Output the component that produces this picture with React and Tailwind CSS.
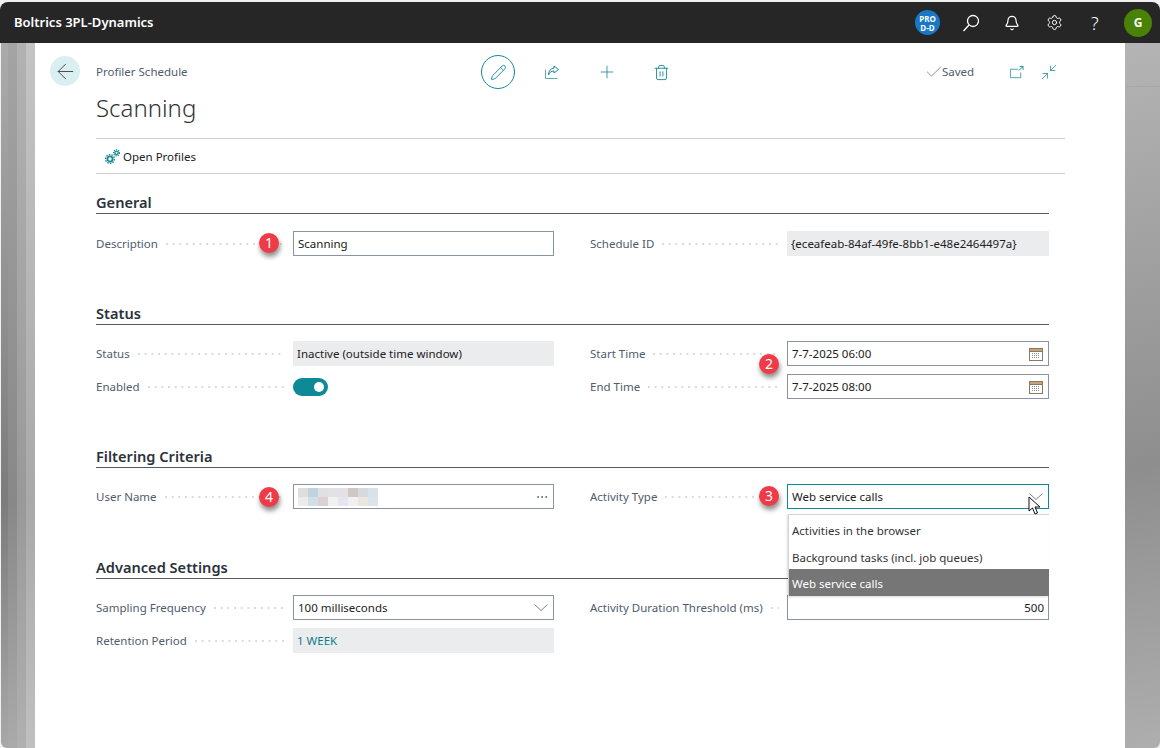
import React from 'react'
import { Bell, Check, Ellipsis, Minimize2, Pencil, Plus, Settings, Trash2, ArrowLeft } from 'lucide-react'

const mosaic = [
    'bg-[#e0dedd]', 'bg-[#bfd4dc]', 'bg-[#e0e0e2]', 'bg-[#e1e1e6]', 'bg-[#e4e0e6]', 'bg-[#d0c8c8]', 'bg-[#d6d9de]', 'bg-[#d6e2ec]',
    'bg-[#edecea]', 'bg-[#cfe0ea]', 'bg-[#d9d2d0]', 'bg-[#f1f1f2]', 'bg-[#e6e6f0]', 'bg-[#f1f1f4]', 'bg-[#ece6e0]', 'bg-[#dbe4ec]',
]

function Badge({ n, className }) {
    return (
        <div className={`absolute w-[20px] h-[20px] rounded-full bg-[#ef3b47] text-white text-[14px] leading-[20px] text-center shadow-[1px_4px_5px_rgba(0,0,0,0.45)] ${className}`}>
            {n}
        </div>
    )
}

function CalendarIcon() {
    return (
        <svg width="14" height="14" viewBox="0 0 14 14" className="shrink-0 mr-[1px]">
            <rect x="0.5" y="1.5" width="13" height="12" fill="#fff" stroke="#8a7a62" />
            <rect x="0.5" y="1.5" width="13" height="3" fill="#c4a47c" stroke="#8a7a62" />
            <path d="M3 6.5h8M3 8.5h8M3 10.5h8" stroke="#8a8a8a" strokeDasharray="1 1" />
        </svg>
    )
}

function Chevron() {
    return (
        <svg width="14" height="7" viewBox="0 0 14 7" fill="none" stroke="#6b7686" strokeWidth="0.9" className="shrink-0 mr-[1px]">
            <path d="M0.5 0.5L7 6.5l6.5-6" />
        </svg>
    )
}

function Row({ label, children, badge }) {
    return (
        <div className="relative flex items-center h-[25px]">
            <span className="text-[11.5px] text-[#505c6d] whitespace-nowrap">{label}</span>
            <span className="flex-1 h-[2px] ml-[8px] mr-[8px] bg-[linear-gradient(to_right,#d8dadd_2px,transparent_2px)] bg-[length:6.7px_2px]"></span>
            {children}
            {badge}
        </div>
    )
}

function Box({ children, w = 'w-[261px]', line = 'border-[#8a93a3]', className = '' }) {
    return (
        <div className={`${w} h-[25px] shrink-0 flex items-center px-[4px] text-[11.5px] text-[#212121] whitespace-nowrap border ${line} bg-white ${className}`}>
            {children}
        </div>
    )
}

function ReadOnly({ children, w = 'w-[261px]', color = 'text-[#212121]' }) {
    return (
        <div className={`${w} h-[25px] shrink-0 flex items-center px-[4px] text-[11.5px] whitespace-nowrap bg-[#ebecee] ${color}`}>
            {children}
        </div>
    )
}

function Section({ title, className = '', left, right, gap = 'mt-[16px]' }) {
    return (
        <section className={className}>
            <h2 className="h-[22px] text-[14.6px] leading-[20px] font-semibold text-[#2b323c] border-b border-[#505c6d]">{title}</h2>
            <div className={`grid grid-cols-[458px_459px] gap-x-[36px] ${gap}`}>
                <div className="flex flex-col gap-y-[8px]">{left}</div>
                <div className="flex flex-col gap-y-[8px]">{right}</div>
            </div>
        </section>
    )
}

export default function App() {
    return (
        <div className="w-[1160px] h-[748px] overflow-hidden flex flex-col bg-[#f0f0f0] pt-[2px] font-['Noto_Sans','Open_Sans',sans-serif]">
            <header className="h-[41px] shrink-0 bg-[#262626] rounded-t-[8px] flex items-center text-white">
                <span className="ml-[14px] text-[13px] font-semibold">Boltrics 3PL-Dynamics</span>
                <div className="ml-auto w-[25px] h-[25px] rounded-full bg-[#1878c6] flex flex-col items-center justify-center text-[8px] leading-[9px] font-bold">
                    <span>PRO</span>
                    <span>D-D</span>
                </div>
                <svg width="18" height="18" viewBox="0 0 18 18" fill="none" stroke="#fff" strokeWidth="1.3" className="ml-[22px]">
                    <circle cx="11" cy="7" r="5.5" />
                    <path d="M7 11l-5.5 6" />
                </svg>
                <Bell size={16} strokeWidth={1.8} className="ml-[24px]" />
                <Settings size={17} strokeWidth={1.4} className="ml-[26px]" />
                <span className="ml-[28px] w-[10px] text-[18px] leading-none font-light">?</span>
                <div className="ml-[23px] mr-[8px] w-[28px] h-[28px] rounded-full bg-[#498205] flex items-center justify-center text-[12px] font-bold">G</div>
            </header>

            <main className="flex-1 flex min-h-0">
                <div className="w-[35px] shrink-0 flex pl-[1px]">
                    <div className="w-[7px] rounded-bl-[6px] bg-[linear-gradient(#ababab,#7c7c7c_65%,#a8a8a8)]"></div>
                    <div className="w-[9px] bg-[linear-gradient(#a4a4a4,#888888_65%,#aaaaaa)]"></div>
                    <div className="w-[9px] bg-[linear-gradient(#b2b2b2,#999999_65%,#b0b0b0)]"></div>
                    <div className="w-[9px] bg-[linear-gradient(#c4c4c4,#a9a9a9_65%,#c0c0c0)]"></div>
                </div>

                <div className="w-[1090px] shrink-0 bg-white flex pt-[12px] pl-[15px]">
                    <div className="w-[30px] h-[30px] mt-[1px] rounded-full bg-[#d9eff2] flex items-center justify-center">
                        <ArrowLeft size={25} strokeWidth={0.9} className="text-[#444]" />
                    </div>

                    <div className="ml-[16px] w-[969px]">
                        <div className="flex items-center h-[34px]">
                            <span className="w-[385px] text-[11.5px] text-[#505c6d]">Profiler Schedule</span>
                            <div className="w-[34px] h-[34px] rounded-full border border-[#1a8a94] flex items-center justify-center">
                                <Pencil size={17} strokeWidth={1.3} className="text-[#1a8a94]" />
                            </div>
                            <svg width="16" height="16" viewBox="0 0 16 16" fill="none" stroke="#1a8a94" strokeWidth="1" className="ml-[29px]">
                                <path d="M1.5 5.5v9h12" opacity="0.7" />
                                <path d="M10 2l4.5 3.5L10 9V7C7 7 5.5 8.5 4.5 11 4.5 7 6.5 4.5 10 4z" />
                            </svg>
                            <Plus size={20} strokeWidth={1} className="ml-[37px] text-[#1a8a94]" />
                            <Trash2 size={17} strokeWidth={1.3} className="ml-[36px] text-[#1a8a94]" />
                            <Check size={20} strokeWidth={0.8} className="ml-[254px] text-[#505c6d]" />
                            <span className="-ml-[2px] text-[11.5px] text-[#505c6d]">Saved</span>
                            <svg width="15" height="15" viewBox="0 0 16 16" fill="none" stroke="#1a8a94" strokeWidth="1" className="ml-[35px]">
                                <path d="M10 4.5H1.5v9h11V8" opacity="0.8" />
                                <path d="M10.5 6L14.5 2M11.5 1.5h3.5V5" />
                            </svg>
                            <Minimize2 size={18} strokeWidth={1} className="ml-[16px] text-[#1a8a94]" />
                        </div>
                        <h1 className="mt-[1px] h-[48px] text-[24px] leading-[36px] font-light text-[#333]">Scanning</h1>

                        <div className="flex items-center h-[36px] border-y border-[#d0d0d0] pl-[9px]">
                            <svg width="15" height="15" viewBox="0 0 15 15" fill="none" stroke="#1a8a94" className="shrink-0">
                                <circle cx="5" cy="10" r="2.6" strokeWidth="1.8" />
                                <circle cx="5" cy="10" r="4.4" strokeWidth="1.4" strokeDasharray="1.5 1.2" />
                                <circle cx="11.5" cy="3.8" r="1.7" strokeWidth="1.4" />
                                <circle cx="11.5" cy="3.8" r="3" strokeWidth="1.2" strokeDasharray="1.2 1" />
                            </svg>
                            <span className="ml-[3px] pt-[2px] text-[11.5px] text-[#212121]">Open Profiles</span>
                        </div>

                        <div className="relative mt-[18px] w-[953px]">
                            <Section
                                title="General"
                                gap="mt-[17px]"
                                left={
                                    <Row label="Description" badge={<Badge n="1" className="left-[163px] top-[2px]" />}>
                                        <Box>Scanning</Box>
                                    </Row>
                                }
                                right={
                                    <Row label="Schedule ID">
                                        <ReadOnly w="w-[262px]">{'{eceafeab-84af-49fe-8bb1-e48e2464497a}'}</ReadOnly>
                                    </Row>
                                }
                            />
                            <Section
                                title="Status"
                                className="mt-[47px]"
                                left={
                                    <>
                                        <Row label="Status">
                                            <ReadOnly>Inactive (outside time window)</ReadOnly>
                                        </Row>
                                        <Row label="Enabled">
                                            <div className="w-[261px] shrink-0">
                                                <div className="w-[35px] h-[18px] rounded-full bg-[#0e8a96] flex items-center justify-end pr-[4px]">
                                                    <div className="w-[10px] h-[10px] rounded-full bg-white"></div>
                                                </div>
                                            </div>
                                        </Row>
                                    </>
                                }
                                right={
                                    <>
                                        <Row label="Start Time" badge={<Badge n="2" className="left-[169px] top-[13px]" />}>
                                            <Box w="w-[262px]" className="justify-between">7-7-2025 06:00<CalendarIcon /></Box>
                                        </Row>
                                        <Row label="End Time">
                                            <Box w="w-[262px]" className="justify-between">7-7-2025 08:00<CalendarIcon /></Box>
                                        </Row>
                                    </>
                                }
                            />
                            <Section
                                title="Filtering Criteria"
                                className="mt-[47px]"
                                left={
                                    <Row label="User Name" badge={<Badge n="4" className="left-[163px] top-[3px]" />}>
                                        <Box className="justify-between">
                                            <div className="grid grid-cols-8 w-[80px]">
                                                {mosaic.map((c, i) => <div key={i} className={`h-[9px] ${c}`}></div>)}
                                            </div>
                                            <Ellipsis size={14} strokeWidth={1.3} className="text-[#505c6d]" />
                                        </Box>
                                    </Row>
                                }
                                right={
                                    <Row label="Activity Type" badge={<Badge n="3" className="left-[169px] top-[2px]" />}>
                                        <Box w="w-[262px]" line="border-[#0e8a96]" className="justify-between">
                                            Web service calls
                                            <Chevron />
                                        </Box>
                                    </Row>
                                }
                            />
                            <Section
                                title="Advanced Settings"
                                className="mt-[48px]"
                                left={
                                    <>
                                        <Row label="Sampling Frequency">
                                            <Box className="justify-between">
                                                100 milliseconds
                                                <Chevron />
                                            </Box>
                                        </Row>
                                        <Row label="Retention Period">
                                            <ReadOnly color="text-[#0e7f8a]">1 WEEK</ReadOnly>
                                        </Row>
                                    </>
                                }
                                right={
                                    <Row label="Activity Duration Threshold (ms)">
                                        <Box w="w-[262px]" className="justify-end">500</Box>
                                    </Row>
                                }
                            />

                            {/* open dropdown over the form */}
                            <div className="absolute left-[692px] top-[322px] w-[261px] h-[82px] bg-white border-l border-t border-[#d4d4d4] text-[11.5px] text-[#333] shadow-[-1px_1px_2px_rgba(0,0,0,0.15)]">
                                <div className="h-[27px] pt-[2px] leading-[27px] pl-[3px]">Activities in the browser</div>
                                <div className="h-[27px] pt-[2px] leading-[27px] pl-[3px]">Background tasks (incl. job queues)</div>
                                <div className="h-[27px] pt-[1px] leading-[27px] pl-[3px] bg-[#767676] text-white">Web service calls</div>
                            </div>

                            {/* mouse cursor */}
                            <svg width="14" height="20" viewBox="0 0 14 20" className="absolute left-[932px] top-[304px]">
                                <path d="M1 1v14l3.5-3 2.5 6 2.5-1-2.5-6h5z" fill="#fff" stroke="#111" strokeWidth="1" />
                            </svg>
                        </div>
                    </div>
                </div>

                <div className="w-[35px] shrink-0 rounded-br-[6px] bg-[linear-gradient(170deg,#b4b4b4,#8e8e8e_60%,#aeaeae)]">
                    <div className="h-[44px] border-b border-[#a8a8a8]"></div>
                </div>
            </main>
        </div>
    )
}
